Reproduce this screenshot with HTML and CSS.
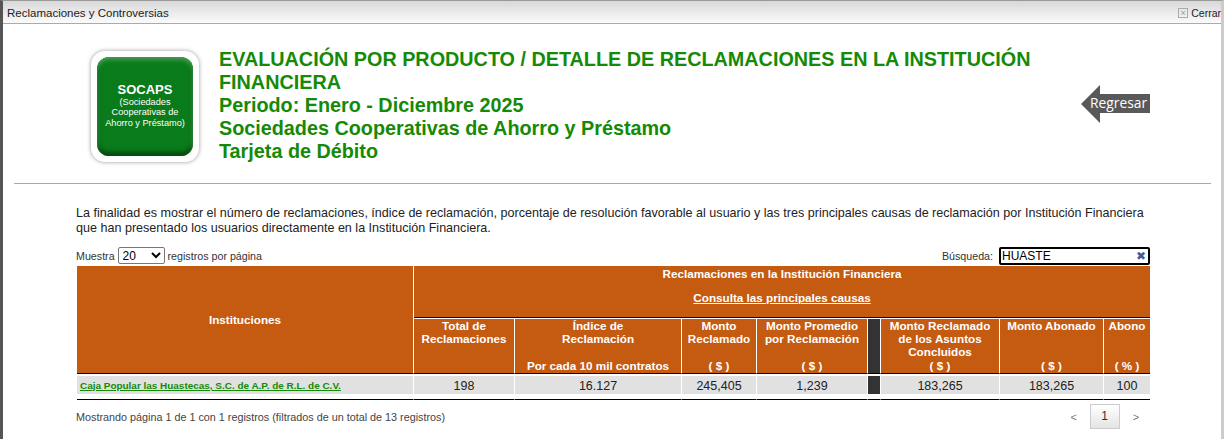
FILE: index.html
```html
<!DOCTYPE html>
<html lang="en">
    <head>
        <meta charset="UTF-8">
        <title>Reclamaciones y Controversias</title>
        <link rel="stylesheet" href="styles.css">
    </head>
    <body>
        <div class="window">
            <div class="titlebar">
                <span class="wintitle">Reclamaciones y Controversias</span>
                <span class="close"><span class="closebox">×</span>Cerrar</span>
            </div>

            <div class="top">
                <div class="logo">
                    <div class="logoin">
                        <b>SOCAPS</b>
                        <span>(Sociedades<br>Cooperativas de<br>Ahorro y Préstamo)</span>
                    </div>
                </div>
                <div class="heading">
                    EVALUACIÓN POR PRODUCTO / DETALLE DE RECLAMACIONES EN LA INSTITUCIÓN FINANCIERA<br>
                    Periodo: Enero - Diciembre 2025<br>
                    Sociedades Cooperativas de Ahorro y Préstamo<br>
                    Tarjeta de Débito
                </div>
                <svg class="back" width="69" height="38" viewBox="0 0 69 38">
                    <polygon points="0,19 19,0 19,9 69,9 69,28 19,28 19,38" fill="#595959"/>
                    <text x="9" y="23" font-family="'Open Sans', sans-serif" font-size="13.8" fill="#fff">Regresar</text>
                </svg>
            </div>

            <hr class="line">

            <div class="main">
                <p class="intro">La finalidad es mostrar el número de reclamaciones, índice de reclamación, porcentaje de resolución favorable al usuario y las tres principales causas de reclamación por Institución Financiera que han presentado los usuarios directamente en la Institución Financiera.</p>

                <div class="controls">
                    <div>
                        Muestra
                        <select class="pagesize"><option>20</option></select>
                        registros por página
                    </div>
                    <div class="search">
                        Búsqueda:
                        <span class="searchbox">HUASTE<span class="clear">✖</span></span>
                    </div>
                </div>

                <table class="data">
                    <colgroup>
                        <col class="c1"><col class="c2"><col class="c3"><col class="c4"><col class="c5">
                        <col class="c6"><col class="c7"><col class="c8"><col class="c9">
                    </colgroup>
                    <thead>
                        <tr class="row1">
                            <th rowspan="2" class="inst">Instituciones</th>
                            <th colspan="8">
                                <div>Reclamaciones en la Institución Financiera</div>
                                <a class="causes" href="#">Consulta las principales causas</a>
                            </th>
                        </tr>
                        <tr class="row2">
                            <th><div class="cell"><span>Total de<br>Reclamaciones</span></div></th>
                            <th><div class="cell"><span>Índice de<br>Reclamación</span><span>Por cada 10 mil contratos</span></div></th>
                            <th><div class="cell"><span>Monto<br>Reclamado</span><span>( $ )</span></div></th>
                            <th><div class="cell"><span>Monto Promedio<br>por Reclamación</span><span>( $ )</span></div></th>
                            <th class="dark"></th>
                            <th><div class="cell"><span>Monto Reclamado<br>de los Asuntos<br>Concluidos</span><span>( $ )</span></div></th>
                            <th><div class="cell"><span>Monto Abonado</span><span>( $ )</span></div></th>
                            <th><div class="cell"><span>Abono</span><span>( % )</span></div></th>
                        </tr>
                    </thead>
                    <tbody>
                        <tr>
                            <td class="name"><a href="#">Caja Popular las Huastecas, S.C. de A.P. de R.L. de C.V.</a></td>
                            <td>198</td>
                            <td>16.127</td>
                            <td>245,405</td>
                            <td>1,239</td>
                            <td class="dark"></td>
                            <td>183,265</td>
                            <td>183,265</td>
                            <td>100</td>
                        </tr>
                        <tr class="closing">
                            <td></td><td></td><td></td><td></td><td></td><td></td><td></td><td></td><td></td>
                        </tr>
                    </tbody>
                </table>

                <div class="foot">
                    <span>Mostrando página 1 de 1 con 1 registros (filtrados de un total de 13 registros)</span>
                    <div class="pager">
                        <span>&lt;</span>
                        <span class="current">1</span>
                        <span>&gt;</span>
                    </div>
                </div>
            </div>
        </div>
    </body>
</html>
```

FILE: styles.css
```css
html, body {
    margin: 0;
    height: 439px;
    overflow: hidden;
    background: #fff;
    font-family: "Liberation Sans", Arial, sans-serif;
}
.window {
    height: 439px;
    box-sizing: border-box;
    border-left: 3px solid #555;
    border-right: 3px solid #ccc;
    border-top: 1px solid #999;
}
.titlebar {
    display: flex;
    justify-content: space-between;
    align-items: center;
    height: 21px;
    padding: 1px 0 0 4px;
    background: linear-gradient(#d8d8d8, #fbfbfb);
    border-bottom: 1px solid #aaa;
    color: #222;
}
.wintitle { font-size: 11.5px; }
.close {
    display: flex;
    align-items: center;
    font-size: 10.5px;
}
.closebox {
    width: 8px;
    height: 8px;
    line-height: 8px;
    margin-right: 3px;
    border: 1px solid #aaa;
    font-size: 9px;
    text-align: center;
    color: #999;
}

.top {
    display: flex;
    height: 159px;
    box-sizing: border-box;
    padding: 26px 71px 0 88px;
}
.logo {
    width: 108px;
    height: 111px;
    margin-top: 1px;
    box-sizing: border-box;
    padding: 6px;
    background: #fff;
    border-radius: 14px;
    box-shadow: 0 0 4px #999;
}
.logoin {
    display: flex;
    flex-direction: column;
    align-items: center;
    justify-content: center;
    height: 100%;
    padding-bottom: 2px;
    box-sizing: border-box;
    border-radius: 12px;
    background: #0a7b1a;
    box-shadow: inset 0 3px 4px #4a9d58, inset 0 -4px 4px #04470d;
    color: #fff;
    text-align: center;
    font-size: 9.2px;
    line-height: 10.5px;
}
.logoin b { font-size: 13px; line-height: 14px; }
.heading {
    flex: 1;
    margin: -2px 30px 0 20px;
    font-size: 19.8px;
    line-height: 23px;
    font-weight: bold;
    color: #148a06;
}
.back {
    flex: none;
    margin-top: 35px;
}

.line {
    height: 0;
    margin: 0 10px 0 11px;
    border: 0;
    border-top: 1px solid #aaa;
}

.main {
    width: 1074px;
    margin-left: 73px;
}
.intro {
    margin: 22px 0 11px;
    font-size: 12.57px;
    line-height: 15px;
    color: #222;
}
.controls {
    display: flex;
    justify-content: space-between;
    align-items: flex-start;
    height: 18px;
    margin-bottom: 1px;
    font-size: 10.7px;
    color: #333;
}
.pagesize {
    width: 47px;
    height: 17px;
    margin: 0;
    padding: 0;
    font-family: "Liberation Sans", Arial, sans-serif;
    font-size: 12px;
    background: #fff;
    border: 1px solid #777;
    border-radius: 2px;
}
.search { display: flex; align-items: center; gap: 6px; }
.searchbox {
    position: relative;
    display: block;
    width: 146px;
    height: 14px;
    padding-left: 1px;
    border: 2px solid #000;
    border-radius: 2px;
    font-size: 12px;
    line-height: 14px;
    color: #000;
}
.clear {
    position: absolute;
    right: 2px;
    top: 0;
    font-size: 12px;
    color: #3b5f9a;
}

.data {
    width: 1073px;
    margin-left: 1px;
    border-collapse: separate;
    border-spacing: 0;
    table-layout: fixed;
    font-size: 12.5px;
}
.c1 { width: 337px; }
.c2 { width: 101px; }
.c3 { width: 167px; }
.c4 { width: 75px; }
.c5 { width: 111px; }
.c6 { width: 13px; }
.c7 { width: 119px; }
.c8 { width: 104px; }
.c9 { width: 46px; }

.data th {
    padding: 0;
    background: #c55a11;
    color: #fff;
    font-size: 11.7px;
    font-weight: bold;
    line-height: 13px;
    border-right: 1px solid #fff;
    border-bottom: 1px solid #000;
    vertical-align: middle;
}
.data th:last-child { border-right: 0; }
.row1 th { height: 48px; padding-bottom: 3px; }
.data .inst { height: auto; padding-bottom: 0; }
.row1 div { margin-top: -10px; margin-bottom: 11px; }
.row2 th { height: 55px; box-shadow: inset 0 1px 0 #fff; vertical-align: top; }
.causes { color: #fff; }
.cell {
    display: flex;
    flex-direction: column;
    justify-content: space-between;
    height: 53px;
    padding-top: 1px;
}
.data .dark { background: #333; }

.data td {
    height: 17px;
    padding: 1px 0 0;
    background: #e0e1e0;
    text-align: center;
    color: #222;
    border-right: 1px solid #fff;
    border-top: 2px solid #fff;
}
.data td:last-child { border-right: 0; }
.data .name { padding-left: 3px; text-align: left; font-size: 9.95px; font-weight: bold; }
.name a { color: #148a06; }
.data .closing td {
    height: 5px;
    padding: 0;
    background: #fff;
    border-top: 0;
    border-bottom: 1px solid #000;
}

.foot {
    display: flex;
    justify-content: space-between;
    align-items: center;
    margin-top: 4px;
    font-size: 10.8px;
    color: #444;
}
.pager {
    display: flex;
    align-items: center;
    gap: 13px;
    margin-right: 11px;
    color: #777;
}
.current {
    width: 28px;
    height: 23px;
    line-height: 23px;
    text-align: center;
    font-size: 12px;
    color: #333;
    background: linear-gradient(#fff, #e4e4e4);
    border: 1px solid #ccc;
}
```
